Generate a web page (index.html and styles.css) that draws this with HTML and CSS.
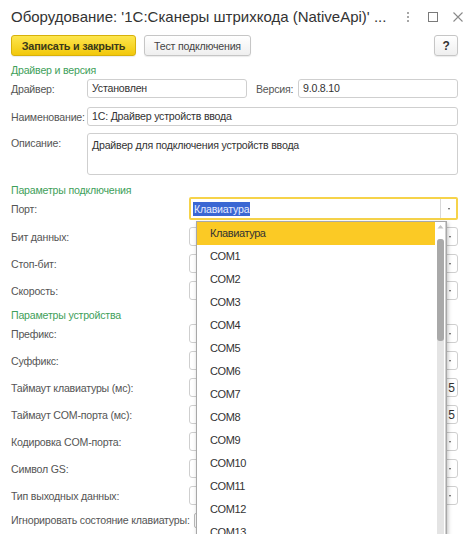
FILE: index.html
```html
<!DOCTYPE html>
<html lang="ru">
<head>
<meta charset="utf-8">
<link rel="stylesheet" href="styles.css">
</head>
<body>
<div class="window">
  <div class="titlebar">
    <div class="title">Оборудование: '1С:Сканеры штрихкода (NativeApi)' ...</div>
    <div class="wicons">
      <svg class="wi" width="12" height="12" viewBox="0 0 12 12"><circle cx="6" cy="2" r="1" fill="#8a8a8a"/><circle cx="6" cy="6" r="1" fill="#8a8a8a"/><circle cx="6" cy="10" r="1" fill="#8a8a8a"/></svg>
      <svg class="wi" width="12" height="12" viewBox="0 0 12 12"><rect x="1.5" y="1.5" width="9" height="9" fill="none" stroke="#7a7a7a" stroke-width="1"/></svg>
      <svg class="wi" width="12" height="12" viewBox="0 0 12 12"><path d="M1.5 1.5 L10.5 10.5 M10.5 1.5 L1.5 10.5" stroke="#8a8a8a" stroke-width="1.1"/></svg>
    </div>
  </div>
  <div class="toolbar">
    <button class="btn btn-main">Записать и закрыть</button>
    <button class="btn btn-test">Тест подключения</button>
    <span class="spacer"></span>
    <button class="btn btn-help">?</button>
  </div>

  <div class="group g1">Драйвер и версия</div>
  <div class="row r-first">
    <span class="lbl lbl-s">Драйвер:</span>
    <div class="inp w160">Установлен</div>
    <span class="lbl lbl-v">Версия:</span>
    <div class="inp w160">9.0.8.10</div>
  </div>
  <div class="row r-name">
    <span class="lbl lbl-s">Наименование:</span>
    <div class="inp grow">1С: Драйвер устройств ввода</div>
  </div>
  <div class="row row-top">
    <span class="lbl lbl-s">Описание:</span>
    <div class="inp grow area">Драйвер для подключения устройств ввода</div>
  </div>

  <div class="group g2">Параметры подключения</div>
  <div class="row row-port">
    <span class="lbl lbl-l">Порт:</span>
    <div class="combo active">
      <span class="sel">Клавиатура</span>
      <span class="cbtn"><i></i></span>
    </div>
  </div>
  <div class="row rp"><span class="lbl lbl-l">Бит данных:</span><div class="combo"><span class="cbtn"><i></i></span></div></div>
  <div class="row rp"><span class="lbl lbl-l">Стоп-бит:</span><div class="combo"><span class="cbtn"><i></i></span></div></div>
  <div class="row rp"><span class="lbl lbl-l">Скорость:</span><div class="combo"><span class="cbtn"><i></i></span></div></div>

  <div class="group g3">Параметры устройства</div>
  <div class="row rp r-first">
    <span class="lbl lbl-l">Префикс:</span><div class="combo"><span class="cbtn"><i></i></span></div></div>
  <div class="row rp"><span class="lbl lbl-l">Суффикс:</span><div class="combo"><span class="cbtn"><i></i></span></div></div>
  <div class="row rp"><span class="lbl lbl-l">Таймаут клавиатуры (мс):</span><div class="combo num">5</div></div>
  <div class="row rp"><span class="lbl lbl-l">Таймаут COM-порта (мс):</span><div class="combo num">5</div></div>
  <div class="row rp"><span class="lbl lbl-l">Кодировка COM-порта:</span><div class="combo"><span class="cbtn"><i></i></span></div></div>
  <div class="row rp"><span class="lbl lbl-l">Символ GS:</span><div class="combo"><span class="cbtn"><i></i></span></div></div>
  <div class="row rp"><span class="lbl lbl-l">Тип выходных данных:</span><div class="combo"><span class="cbtn"><i></i></span></div></div>
  <div class="row rchk"><span class="lbl lbl-chk">Игнорировать состояние клавиатуры:</span><span class="chk"></span></div>

  <div class="dropdown">
    <div class="items">
      <div class="item hl">Клавиатура</div>
      <div class="item">COM1</div>
      <div class="item">COM2</div>
      <div class="item">COM3</div>
      <div class="item">COM4</div>
      <div class="item">COM5</div>
      <div class="item">COM6</div>
      <div class="item">COM7</div>
      <div class="item">COM8</div>
      <div class="item">COM9</div>
      <div class="item">COM10</div>
      <div class="item">COM11</div>
      <div class="item">COM12</div>
      <div class="item">COM13</div>
    </div>
    <div class="sbar">
      <svg class="sarrow" width="7" height="5" viewBox="0 0 7 5"><path d="M0.5 4.5 L3.5 1 L6.5 4.5 Z" fill="#c4c4c4"/></svg>
      <div class="strack"><div class="sthumb"></div></div>
    </div>
  </div>
</div>
</body>
</html>
```

FILE: styles.css
```css
* { box-sizing: border-box; }
html, body { margin: 0; padding: 0; background: #fff; }
body {
  font-family: "Liberation Sans", Arial, sans-serif;
  font-size: 10.6px;
  letter-spacing: -0.2px;
  color: #444;
  width: 474px;
  height: 534px;
  overflow: hidden;
}
.window {
  position: relative;
  padding: 0 16px 0 11px;
  height: 534px;
  overflow: hidden;
}
.titlebar {
  display: flex;
  align-items: center;
  height: 33px;
}
.title {
  flex: 1;
  font-size: 15px;
  letter-spacing: 0;
  color: #333;
  white-space: nowrap;
}
.wicons {
  display: flex;
  gap: 13px;
  margin-right: -6px;
  align-items: center;
}
.toolbar {
  display: flex;
  align-items: center;
  gap: 8px;
  height: 21px;
  margin-top: 2px;
}
.spacer { flex: 1; }
.btn {
  font-family: inherit;
  font-size: 10.6px;
  letter-spacing: -0.2px;
  height: 21px;
  padding: 0 10px;
  border: 1px solid #c6c6c6;
  border-radius: 3px;
  background: linear-gradient(#ffffff, #efefef);
  color: #444;
  white-space: nowrap;
  box-shadow: 0 1px 1px rgba(0,0,0,0.08);
}
.btn-main {
  width: 125px;
  padding: 0;
  font-size: 10.8px;
  font-weight: bold;
  color: #3a3a1a;
  background: linear-gradient(#fde64e, #f2c80b);
  border-color: #d7b10b;
}
.btn-test { width: 107px; padding: 0; }
.btn-help {
  width: 24px;
  padding: 0;
  font-weight: bold;
  font-size: 12px;
  color: #333;
}
.group {
  color: #3ea05a;
  height: 14px;
  line-height: 14px;
}
.g1 { margin-top: 7px; }
.g2 { margin-top: 8px; }
.g3 { margin-top: 8px; }
.row {
  display: flex;
  align-items: center;
  height: 19px;
  margin-top: 8px;
}
.row.r-first { margin-top: 2px; }
.row.r-name { margin-top: 9px; }
.row-top { align-items: flex-start; height: 42px; margin-top: 7px; }
.lbl { color: #555; white-space: nowrap; }
.lbl-s { width: 76px; }
.lbl-v { width: 42px; margin-left: 9px; }
.lbl-l { width: 178px; }
.row-top .lbl { margin-top: 4px; }
.inp {
  height: 19px;
  border: 1px solid #cfcfcf;
  border-radius: 3px;
  padding: 0 4px;
  line-height: 17px;
  color: #333;
  background: #fff;
  white-space: nowrap;
}
.w160 { width: 160px; }
.grow { flex: 1; }
.area { height: 42px; padding-top: 3px; }
.row-port { height: 23px; margin-top: 0; }
.combo {
  flex: 1;
  height: 19px;
  border: 1px solid #cfcfcf;
  border-radius: 3px;
  background: #fff;
  display: flex;
  align-items: center;
  justify-content: flex-end;
  color: #333;
}
.combo.active {
  height: 23px;
  border: 2px solid #f6d34a;
  border-radius: 2px;
  justify-content: space-between;
  padding-left: 2px;
}
.sel {
  background: #3a67d3;
  color: #e6ecff;
  height: 14px;
  line-height: 14px;
  padding: 0 1px;
}
.cbtn {
  width: 16px;
  height: 100%;
  border-left: 1px solid #d8d8d8;
  display: flex;
  align-items: center;
  justify-content: center;
}
.cbtn i {
  display: block;
  width: 0; height: 0;
  border-left: 1.5px solid transparent;
  border-right: 1.5px solid transparent;
  border-top: 2px solid #555;
}
.num { padding-right: 2px; font-size: 12px; letter-spacing: 0; }
.rp { margin-top: 8px; }
.row-port + .rp { margin-top: 7px; }
.rchk { margin-top: 7px; height: 16px; }
.lbl-chk { width: 183px; }
.chk {
  width: 14px;
  height: 15px;
  border: 1px solid #bbb;
  border-radius: 2px;
}
.dropdown {
  position: absolute;
  left: 196px;
  top: 221px;
  width: 251px;
  height: 330px;
  background: #fff;
  border: 1px solid #a8a8a8;
  box-shadow: 1px 2px 4px rgba(0,0,0,0.25);
  display: flex;
}
.items { flex: 1; }
.item {
  height: 23px;
  line-height: 23px;
  padding-left: 13px;
  font-size: 11px;
  letter-spacing: -0.4px;
  color: #333;
}
.item.hl { background: #fbca25; }
.sbar {
  width: 11px;
  display: flex;
  flex-direction: column;
  align-items: center;
  border-right: 1px solid #d0d0d0;
}
.sarrow { margin-top: 2px; margin-bottom: 10px; }
.strack {
  flex: 1;
  width: 7px;
  background: #e4e4e4;
  border-radius: 3px;
}
.sthumb {
  width: 7px;
  height: 102px;
  background: #a9a9a9;
  border-radius: 3px;
}
```
